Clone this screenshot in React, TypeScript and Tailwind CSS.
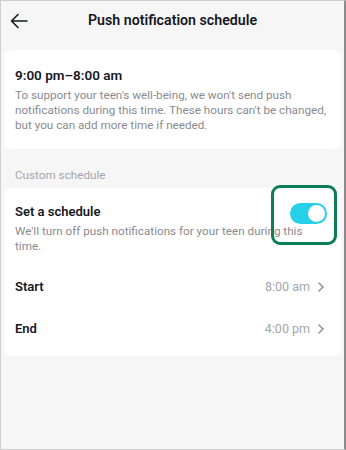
const font = { fontFamily: "Roboto, 'Liberation Sans', sans-serif" };

function Chevron() {
  return (
    <svg width="8" height="12" viewBox="0 0 8 12" fill="none" stroke="#8a8b91" strokeWidth="1.4" strokeLinecap="round" strokeLinejoin="round">
      <path d="M2 2l4 4-4 4" />
    </svg>
  );
}

function TimeRow({ label, value, last }: { label: string; value: string; last?: boolean }) {
  return (
    <div className={`h-[42px] flex items-center justify-between pr-[4px] ${last ? "mb-[6px]" : ""}`}>
      <span className="text-[13px] font-semibold text-[#161823]">{label}</span>
      <span className="flex items-center gap-[7px] text-[12.5px] text-[#a5a6ab]">
        {value}
        <Chevron />
      </span>
    </div>
  );
}

export default function App() {
  return (
    <div
      className="w-[346px] h-[450px] bg-[#f6f6f6] border-l border-t border-b border-[#cfcfcf] border-r-2 border-r-[#8c8c8c] flex flex-col relative overflow-hidden"
      style={font}
    >
      <header className="h-[46px] flex items-center relative shrink-0">
        <svg
          className="absolute left-[9px] top-[12px]"
          width="18"
          height="16"
          viewBox="0 0 18 16"
          fill="none"
          stroke="#161823"
          strokeWidth="1.6"
          strokeLinecap="round"
          strokeLinejoin="round"
        >
          <path d="M17 8H1.5M8 1.5L1.5 8 8 14.5" />
        </svg>
        <h1 className="w-full text-center text-[14.2px] font-semibold text-[#161823] -mt-[6px]">
          Push notification schedule
        </h1>
      </header>

      <div className="mx-[3px] mt-[3px] bg-white rounded-[6px] pl-[11px] pr-[10px] pt-[16px] pb-[16px]">
        <p className="text-[13.5px] font-semibold text-[#161823] leading-[18px]">
          9:00 pm–8:00 am
        </p>
        <p className="mt-[4px] text-[11.7px] leading-[15px] text-[#8a8b91]">
          To support your teen's well-being, we won't send push notifications
          during this time. These hours can't be changed, but you can add more
          time if needed.
        </p>
      </div>

      <p className="px-[14px] mt-[19px] text-[11.7px] leading-[15px] text-[#a5a6ab]">
        Custom schedule
      </p>

      <div className="mx-[3px] mt-[5px] bg-white rounded-[6px] pl-[11px] pr-[12px]">
        <div className="pt-[15px] pb-[12px]">
          <p className="text-[13px] font-semibold text-[#161823] leading-[18px]">
            Set a schedule
          </p>
          <p className="mt-[3px] text-[11.7px] leading-[15px] text-[#8a8b91] pr-[12px]">
            We'll turn off push notifications for your teen during this time.
          </p>
        </div>
        <TimeRow label="Start" value="8:00 am" />
        <TimeRow label="End" value="4:00 pm" last />
      </div>

      <div className="absolute left-[289px] top-[202px] w-[37px] h-[21px] rounded-full bg-[#25d0e8] flex items-center justify-end pr-[2px]">
        <span className="w-[17px] h-[17px] rounded-full bg-white" />
      </div>
      <div className="absolute left-[270px] top-[184px] w-[66px] h-[60px] rounded-[9px] border-[3px] border-[#0d7d55]" />
    </div>
  );
}
